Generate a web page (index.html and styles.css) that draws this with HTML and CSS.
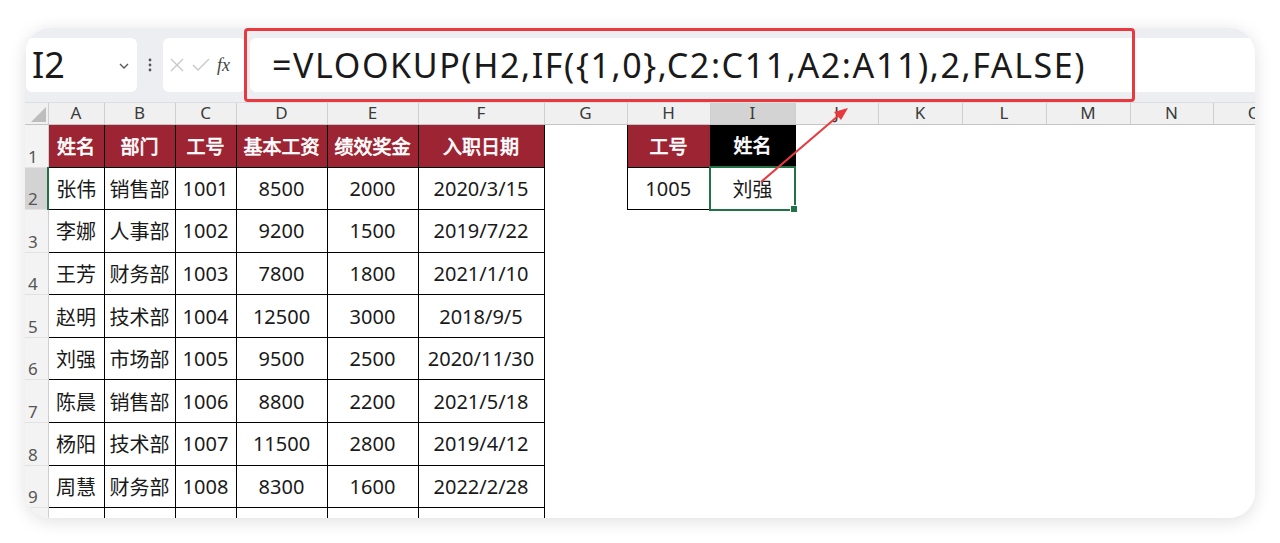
FILE: index.html
```html
<!DOCTYPE html>
<html lang="zh">
<head>
<meta charset="utf-8">
<title>VLOOKUP</title>
<link rel="stylesheet" href="styles.css">
</head>
<body>
<div class="card">
  <div class="toolbar">
    <div class="namebox">
      <span class="ref">I2</span>
      <svg class="chev" width="12" height="8" viewBox="0 0 12 8"><path d="M2 2 L6 6 L10 2" fill="none" stroke="#555" stroke-width="1.3"/></svg>
    </div>
    <div class="dots">
      <svg width="4" height="14" viewBox="0 0 4 14"><circle cx="2" cy="2" r="1.4" fill="#555"/><circle cx="2" cy="7" r="1.4" fill="#555"/><circle cx="2" cy="12" r="1.4" fill="#555"/></svg>
    </div>
    <div class="fxbox">
      <svg width="16" height="16" viewBox="0 0 16 16"><path d="M2 2 L14 14 M14 2 L2 14" stroke="#c8c8c8" stroke-width="1.4" fill="none"/></svg>
      <svg width="20" height="16" viewBox="0 0 20 16"><path d="M2 8 L7 13 L18 2" stroke="#c8c8c8" stroke-width="1.4" fill="none"/></svg>
      <span class="fx">fx</span>
    </div>
    <div class="formula">=VLOOKUP(H2,IF({1,0},C2:C11,A2:A11),2,FALSE)</div>
  </div>
  <div class="sheet">
    <table class="grid">
      <colgroup>
        <col class="w23"><col class="w56"><col class="w71"><col class="w61"><col class="w91"><col class="w91"><col class="w126"><col class="w83"><col class="w83"><col class="w85"><col class="w83"><col class="w84"><col class="w84"><col class="w84"><col class="w83"><col class="w83">
      </colgroup>
      <tr class="colhdr">
        <th class="corner"><span class="tri"></span></th>
        <th>A</th><th>B</th><th>C</th><th>D</th><th>E</th><th>F</th><th>G</th><th>H</th><th class="act">I</th><th>J</th><th>K</th><th>L</th><th>M</th><th>N</th><th>O</th>
      </tr>
      <tr class="r1">
        <td class="rh">1</td>
        <td class="b hd">姓名</td><td class="b hd">部门</td><td class="b hd">工号</td><td class="b hd">基本工资</td><td class="b hd">绩效奖金</td><td class="b hd">入职日期</td>
        <td></td><td class="b hd">工号</td><td class="b blk">姓名</td><td></td><td></td><td></td><td></td><td></td><td></td>
      </tr>
      <tr class="dr">
        <td class="rh act">2</td>
        <td class="b">张伟</td><td class="b">销售部</td><td class="b">1001</td><td class="b">8500</td><td class="b">2000</td><td class="b">2020/3/15</td>
        <td></td><td class="b">1005</td><td class="b sel">刘强<span class="handle"></span></td><td></td><td></td><td></td><td></td><td></td><td></td>
      </tr>
      <tr class="dr">
        <td class="rh">3</td>
        <td class="b">李娜</td><td class="b">人事部</td><td class="b">1002</td><td class="b">9200</td><td class="b">1500</td><td class="b">2019/7/22</td>
        <td></td><td></td><td></td><td></td><td></td><td></td><td></td><td></td><td></td>
      </tr>
      <tr class="dr">
        <td class="rh">4</td>
        <td class="b">王芳</td><td class="b">财务部</td><td class="b">1003</td><td class="b">7800</td><td class="b">1800</td><td class="b">2021/1/10</td>
        <td></td><td></td><td></td><td></td><td></td><td></td><td></td><td></td><td></td>
      </tr>
      <tr class="dr">
        <td class="rh">5</td>
        <td class="b">赵明</td><td class="b">技术部</td><td class="b">1004</td><td class="b">12500</td><td class="b">3000</td><td class="b">2018/9/5</td>
        <td></td><td></td><td></td><td></td><td></td><td></td><td></td><td></td><td></td>
      </tr>
      <tr class="dr">
        <td class="rh">6</td>
        <td class="b">刘强</td><td class="b">市场部</td><td class="b">1005</td><td class="b">9500</td><td class="b">2500</td><td class="b">2020/11/30</td>
        <td></td><td></td><td></td><td></td><td></td><td></td><td></td><td></td><td></td>
      </tr>
      <tr class="dr">
        <td class="rh">7</td>
        <td class="b">陈晨</td><td class="b">销售部</td><td class="b">1006</td><td class="b">8800</td><td class="b">2200</td><td class="b">2021/5/18</td>
        <td></td><td></td><td></td><td></td><td></td><td></td><td></td><td></td><td></td>
      </tr>
      <tr class="dr">
        <td class="rh">8</td>
        <td class="b">杨阳</td><td class="b">技术部</td><td class="b">1007</td><td class="b">11500</td><td class="b">2800</td><td class="b">2019/4/12</td>
        <td></td><td></td><td></td><td></td><td></td><td></td><td></td><td></td><td></td>
      </tr>
      <tr class="dr">
        <td class="rh">9</td>
        <td class="b">周慧</td><td class="b">财务部</td><td class="b">1008</td><td class="b">8300</td><td class="b">1600</td><td class="b">2022/2/28</td>
        <td></td><td></td><td></td><td></td><td></td><td></td><td></td><td></td><td></td>
      </tr>
      <tr class="dr">
        <td class="rh"></td>
        <td class="b"></td><td class="b"></td><td class="b"></td><td class="b"></td><td class="b"></td><td class="b"></td>
        <td></td><td></td><td></td><td></td><td></td><td></td><td></td><td></td><td></td>
      </tr>
    </table>
  </div>
</div>
<div class="highlight"></div>
<svg class="arrow" width="1280" height="543" viewBox="0 0 1280 543">
  <line x1="761" y1="182" x2="838" y2="116" stroke="#e8393e" stroke-width="2"/>
  <polygon points="848,108 834,112 841,120" fill="#e8393e"/>
</svg>
</body>
</html>
```

FILE: styles.css
```css
html, body {
  margin: 0;
  padding: 0;
  background: #ffffff;
}
body {
  width: 1280px;
  height: 543px;
  overflow: hidden;
  font-family: "Noto Sans", "Noto Sans CJK SC", sans-serif;
}
.card {
  margin: 28px 0 0 25px;
  width: 1230px;
  height: 490px;
  border-radius: 26px;
  overflow: hidden;
  background: #ffffff;
  box-shadow: 0 3px 18px rgba(0, 0, 0, 0.13);
}
.toolbar {
  height: 74px;
  background: #eceef1;
  display: flex;
  align-items: center;
  border-bottom: 1px solid #dcdde0;
}
.namebox {
  margin-left: 1px;
  width: 111px;
  height: 54px;
  background: #fff;
  border-radius: 6px;
  display: flex;
  align-items: center;
  box-sizing: border-box;
  padding-left: 6px;
}
.ref {
  font-size: 36px;
  color: #1a1a1a;
  line-height: 1;
  flex: 1;
}
.chev {
  margin-right: 7px;
  margin-top: 2px;
}
.dots {
  width: 26px;
  display: flex;
  justify-content: center;
}
.fxbox {
  width: 82px;
  height: 54px;
  background: #fff;
  border-radius: 6px;
  display: flex;
  align-items: center;
  box-sizing: border-box;
  padding-left: 6px;
  gap: 6px;
}
.fx {
  font-family: "Liberation Serif", serif;
  font-style: italic;
  font-size: 18px;
  color: #444;
}
.formula {
  margin-left: 5px;
  flex: 1;
  height: 54px;
  background: #fff;
  border-radius: 6px 0 0 6px;
  display: flex;
  align-items: center;
  padding-left: 22px;
  font-size: 34px;
  letter-spacing: 1.6px;
  color: #1a1a1a;
  white-space: nowrap;
}
.grid {
  border-collapse: collapse;
  table-layout: fixed;
  width: 1271px;
}
.w23 { width: 23px; }
.w56 { width: 56px; }
.w61 { width: 61px; }
.w71 { width: 71px; }
.w83 { width: 83px; }
.w84 { width: 84px; }
.w85 { width: 85px; }
.w91 { width: 91px; }
.w126 { width: 126px; }
.grid td, .grid th {
  padding: 0;
  text-align: center;
  font-weight: normal;
}
.colhdr {
  height: 21px;
}
.colhdr th {
  height: 20px;
  background: #f0f0f0;
  border-right: 1px solid #cfcfcf;
  border-bottom: 1px solid #c4c4c4;
  font-size: 17px;
  line-height: 20px;
  color: #3a3a3a;
}
.colhdr th.act {
  background: #d3d3d3;
}
.corner {
  position: relative;
}
.tri {
  position: absolute;
  right: 2px;
  bottom: 2px;
  width: 0;
  height: 0;
  border-left: 15px solid transparent;
  border-bottom: 15px solid #bdbdbd;
}
.dr {
  height: 42.6px;
}
.r1 {
  height: 43px;
}
.rh {
  background: #f3f3f3;
  border-right: 1px solid #cfcfcf;
  border-bottom: 1px solid #e2e2e2;
  font-size: 17px;
  color: #555;
  vertical-align: bottom;
  text-align: left !important;
  padding-left: 3px !important;
  line-height: 20px;
}
.rh.act {
  background: #d3d3d3;
  border-right: 2px solid #217346;
}
.b {
  border: 1px solid #000;
  font-size: 20px;
  color: #1a1a1a;
}
.hd {
  background: #9d2533;
  color: #fff !important;
  font-weight: 700;
  font-size: 19px;
  -webkit-text-stroke: 0.7px #fff;
}
.blk {
  background: #000;
  color: #fff !important;
  font-weight: 700;
  font-size: 19px;
  -webkit-text-stroke: 0.7px #fff;
}
.sel {
  border: 2px solid #217346;
  position: relative;
}
.handle {
  position: absolute;
  right: -4px;
  bottom: -4px;
  width: 6px;
  height: 6px;
  background: #217346;
  border: 1px solid #fff;
}
.highlight {
  position: absolute;
  left: 244px;
  top: 28px;
  width: 885px;
  height: 68px;
  border: 3px solid #e8393e;
  border-radius: 4px;
}
.arrow {
  position: absolute;
  left: 0;
  top: 0;
  pointer-events: none;
}
```
